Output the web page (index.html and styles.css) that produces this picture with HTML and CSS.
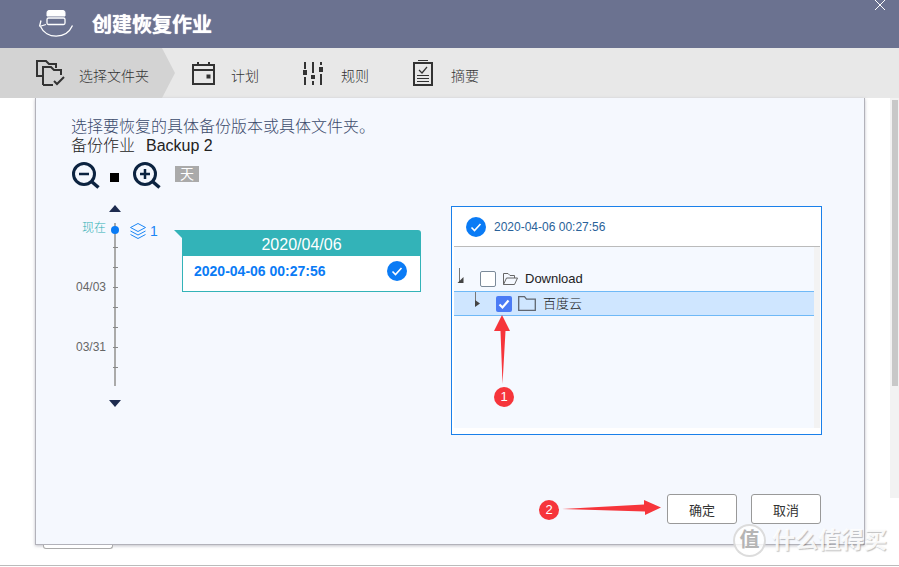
FILE: index.html
```html
<!DOCTYPE html>
<html lang="zh-CN">

	<head>
		<meta charset="UTF-8">
		<title>创建恢复作业</title>
		<link rel="stylesheet" href="styles.css">
	</head>

	<body>
		<div id="page">
			<!-- 标题栏 -->
			<div class="header">
				<svg class="logo" viewBox="0 0 36 28" width="36" height="28" fill="none" stroke="#fff">
					<path d="M9 7V3.500Q9 1.500 11 1.500H25Q27 1.500 27 3.500V7Z" fill="#fff" stroke-width="1" />
					<rect x="9" y="9" width="18" height="6.500" rx="1.500" stroke-width="1.300" />
					<path d="M2.500 17.500C8 30 28 31 34.500 16.500" stroke-width="1.300" />
					<path d="M1.500 17.500L8 15.500M1.500 17.500L3 11.500" stroke-width="1.300" />
				</svg>
				<h1 class="title">创建恢复作业</h1>
				<svg class="close" viewBox="0 0 10 10" width="10" height="10" stroke="#fff" stroke-width="1">
					<path d="M0 0L10 10M10 0L0 10" />
				</svg>
			</div>

			<!-- 步骤 -->
			<div class="tabs">
				<div class="tab active">
					<svg viewBox="0 0 30 26" width="30" height="26" fill="none" stroke="#333" stroke-width="2">
						<path d="M7 16H1V1H10L13 4H20V8" />
						<path d="M7 25V7H15L18 10H25V15M7 25H17" />
						<path d="M18 21L21 24L28 17" />
					</svg>
					<span>选择文件夹</span>
				</div>
				<div class="tab tab-plan">
					<svg viewBox="0 0 23 23" width="23" height="23" fill="none" stroke="#333" stroke-width="2">
						<rect x="1" y="3" width="21" height="19" />
						<path d="M1 8H22M6 0V3M17 0V3" />
						<rect x="14.500" y="12.500" width="4" height="4" fill="#333" stroke="none" />
					</svg>
					<span>计划</span>
				</div>
				<div class="tab">
					<svg viewBox="0 0 20 23" width="20" height="23" fill="#333">
						<rect x="1" y="0" width="2" height="7" />
						<rect x="0" y="8" width="4" height="5" />
						<rect x="1" y="15" width="2" height="8" />
						<rect x="9" y="0" width="2" height="11" />
						<rect x="8" y="13" width="4" height="4" />
						<rect x="9" y="19" width="2" height="4" />
						<rect x="17" y="0" width="2" height="3" />
						<rect x="16" y="5" width="4" height="5" />
						<rect x="17" y="12" width="2" height="11" />
					</svg>
					<span>规则</span>
				</div>
				<div class="tab">
					<svg viewBox="0 0 20 26" width="20" height="26" fill="none" stroke="#333">
						<rect x="1" y="3" width="18" height="22" stroke-width="2" />
						<path d="M5 0.500H15" />
						<path d="M6 10L9 13L14 7" stroke-width="1.200" />
						<path d="M4 15.500H16M4 18.500H16M4 21.500H16" />
					</svg>
					<span>摘要</span>
				</div>
			</div>

			<div class="main">
				<div class="panel-col">
					<div class="panel">
						<p class="desc">选择要恢复的具体备份版本或具体文件夹。</p>
						<p class="job"><span>备份作业</span><span>Backup 2</span></p>

						<!-- 缩放 -->
						<div class="zoom-row">
							<svg viewBox="0 0 28 27" width="28" height="27" fill="none" stroke="#0c2340" stroke-width="3">
								<circle cx="12" cy="12" r="10.500" />
								<path d="M7 12H17" stroke-width="2.500" />
								<path d="M19.500 19.500L26.500 25.500" stroke-width="3.500" />
							</svg>
							<i class="zoom-dot"></i>
							<svg viewBox="0 0 28 27" width="28" height="27" fill="none" stroke="#0c2340" stroke-width="3">
								<circle cx="12" cy="12" r="10.500" />
								<path d="M7 12H17M12 7V17" stroke-width="2.500" />
								<path d="M19.500 19.500L26.500 25.500" stroke-width="3.500" />
							</svg>
							<span class="unit">天</span>
						</div>

						<div class="content">
							<!-- 时间轴 -->
							<div class="timeline">
								<i class="tl-arrow up"></i>
								<div class="tl-rows">
									<i class="tl-spine"></i>
									<div class="tl-row">
										<span class="tl-label now">现在</span>
										<span class="tl-mark"><i class="tl-dot"></i></span>
										<span class="tl-count">
											<svg viewBox="0 0 16 17" width="16" height="17" fill="none" stroke="#1a86f5">
												<path d="M8 0.500L15.500 4.500L8 8.500L0.500 4.500Z" />
												<path d="M0.500 8L8 12L15.500 8" />
												<path d="M0.500 11.500L8 15.500L15.500 11.500" />
											</svg>
											1
										</span>
									</div>
									<div class="tl-row"><span class="tl-label"></span><span class="tl-mark"><i class="tl-tick"></i></span></div>
									<div class="tl-row"><span class="tl-label"></span><span class="tl-mark"><i class="tl-tick"></i></span></div>
									<div class="tl-row"><span class="tl-label">04/03</span><span class="tl-mark"><i class="tl-tick"></i></span></div>
									<div class="tl-row"><span class="tl-label"></span><span class="tl-mark"><i class="tl-tick"></i></span></div>
									<div class="tl-row"><span class="tl-label"></span><span class="tl-mark"><i class="tl-tick"></i></span></div>
									<div class="tl-row"><span class="tl-label">03/31</span><span class="tl-mark"><i class="tl-tick"></i></span></div>
									<div class="tl-row"><span class="tl-label"></span><span class="tl-mark"><i class="tl-tick"></i></span></div>
								</div>
								<i class="tl-arrow down"></i>
							</div>

							<!-- 版本卡片 -->
							<div class="card">
								<div class="card-head">2020/04/06</div>
								<div class="card-body">
									<span>2020-04-06 00:27:56</span>
									<svg class="check-round" viewBox="0 0 20 20" width="20" height="20">
										<circle cx="10" cy="10" r="10" fill="#0a7bf5" />
										<path d="M5.500 10.500L8.500 13.500L14.500 7" fill="none" stroke="#fff" stroke-width="1.600" />
									</svg>
								</div>
							</div>

							<!-- 文件夹树 -->
							<div class="tree">
								<div class="tree-head">
									<svg class="check-round" viewBox="0 0 20 20" width="20" height="20">
										<circle cx="10" cy="10" r="10" fill="#0a7bf5" />
										<path d="M5.500 10.500L8.500 13.500L14.500 7" fill="none" stroke="#fff" stroke-width="1.600" />
									</svg>
									<span>2020-04-06 00:27:56</span>
								</div>
								<div class="tree-body">
									<div class="tree-list">
										<div class="tree-row">
											<svg class="expander" viewBox="0 0 8 17" width="8" height="17">
												<path d="M3.500 1V16" stroke="#777" />
												<path d="M7.500 10V16H1.500Z" fill="#444" />
											</svg>
											<i class="checkbox"></i>
											<svg class="folder" viewBox="0 0 16 14" width="16" height="14" fill="none" stroke="#666">
												<path d="M1.500 12.500V1.500H6L8 3.500H12.500V6" />
												<path d="M1.500 12.500L4.500 6H15.500L12.500 12.500Z" />
											</svg>
											<span>Download</span>
										</div>
										<div class="tree-row selected">
											<svg class="expander" viewBox="0 0 8 17" width="8" height="17">
												<path d="M1.500 0V9" stroke="#777" />
												<path d="M1 8L6 11.500L1 15Z" fill="#444" />
											</svg>
											<i class="checkbox checked">
												<svg viewBox="0 0 16 16" width="16" height="16" fill="none" stroke="#fff" stroke-width="2.200">
													<path d="M3.500 8.500L6.500 11.500L12.500 4.500" />
												</svg>
											</i>
											<svg class="folder" viewBox="0 0 18 15" width="18" height="15" fill="none" stroke="#5f6670" stroke-width="1.300">
												<path d="M0.700 14.300V0.700H6.500L8.500 3.200H17.300V14.300Z" />
											</svg>
											<span class="cn-name">百度云</span>
										</div>
									</div>
									<div class="tree-scroll"></div>
								</div>
							</div>
						</div>

						<div class="footer">
							<button class="btn">确定</button>
							<button class="btn">取消</button>
						</div>
					</div>
					<div class="ghost-btn"></div>
				</div>
				<div class="scrollbar"><div class="thumb"></div></div>
			</div>

			<div class="bottom-line"></div>

			<!-- 标注 -->
			<svg class="arrow-one" viewBox="0 0 24 102" width="24" height="102">
				<path d="M11 0L19 16H14.500L11.500 69L9.500 16H3Z" fill="#f6353b" />
			</svg>
			<span class="mark mark-one">1</span>
			<svg class="arrow-two" viewBox="0 0 100 18" width="100" height="18">
				<path d="M0 10L82 5.500V1L99 8.500L83 16V12.500Z" fill="#f6353b" />
			</svg>
			<span class="mark mark-two">2</span>

			<!-- 水印 -->
			<div class="watermark">
				<span class="wm-badge">值</span>
				<span class="wm-text">什么值得买</span>
			</div>
		</div>
	</body>

</html>
```

FILE: styles.css
```css
* {
	box-sizing: border-box;
}

body {
	margin: 0;
	background: #fff;
	font-family: "Liberation Sans", "Noto Sans CJK SC", sans-serif;
}

p,
h1 {
	margin: 0;
}

#page {
	position: relative;
	display: flex;
	flex-direction: column;
	width: 899px;
	height: 567px;
	overflow: hidden;
}

.header {
	display: flex;
	align-items: center;
	flex: none;
	height: 48px;
	padding-left: 38px;
	background: #6b7290;
}

.logo {
	margin-top: -2px;
}

.title {
	margin: 1px 0 0 18px;
	color: #fff;
	font-size: 20px;
	font-weight: 700;
	line-height: 48px;
	text-shadow: 0 0 1px #fff;
}

.close {
	margin: -38px 14px 0 auto;
}

.tabs {
	display: flex;
	align-items: center;
	flex: none;
	height: 50px;
	background: #e8e8e8;
}

.tab {
	display: flex;
	align-items: center;
	gap: 18px;
	margin-left: 44px;
	color: #333;
	font-size: 14px;
	font-weight: 300;
}

.tab span {
	margin-top: 3px;
}

.tab.active {
	gap: 13px;
	width: 175px;
	height: 50px;
	margin-left: 0;
	padding-left: 36px;
	background: #d3d3d3;
	clip-path: polygon(0 0, 162px 0, 175px 50%, 162px 100%, 0 100%);
}

.tab-plan {
	gap: 16px;
	margin-left: 17px;
}

.main {
	display: flex;
	flex: none;
}

.panel-col {
	margin-left: 35px;
}

.panel {
	display: flex;
	flex-direction: column;
	width: 830px;
	height: 447px;
	padding: 19px 0 20px 35px;
	background: #f5f8fe;
	border: 1px solid #b2b2ba;
	border-top: none;
	box-shadow: 0 1px 3px rgba(80, 80, 100, .35);
}

.desc {
	color: #3b4a6b;
	font-size: 16px;
	font-weight: 300;
	line-height: 19px;
}

.job {
	display: flex;
	gap: 11px;
	color: #222;
	font-size: 16px;
	font-weight: 300;
	line-height: 19px;
}

.zoom-row {
	display: flex;
	align-items: center;
	height: 27px;
	margin-top: 7px;
	margin-bottom: 1px;
	padding-left: 1px;
}

.zoom-dot {
	width: 9px;
	height: 9px;
	margin: 3px 14px 0 10px;
	background: #000;
}

.unit {
	width: 24px;
	height: 16px;
	margin: -3px 0 0 14px;
	background: #aaa;
	color: #fff;
	font-size: 14px;
	line-height: 16px;
	text-align: center;
}

.content {
	display: flex;
	align-items: flex-start;
	margin-top: 16px;
}

.timeline {
	flex: none;
	width: 103px;
	margin-top: -1px;
}

.tl-arrow {
	display: block;
	width: 0;
	margin-left: 38px;
	border-right: 6px solid transparent;
	border-left: 6px solid transparent;
}

.tl-arrow.up {
	margin-bottom: 5px;
	border-bottom: 7px solid #1d2b4f;
}

.tl-arrow.down {
	margin-top: 23px;
	border-top: 7px solid #1d2b4f;
}

.tl-rows {
	position: relative;
}

.tl-spine {
	position: absolute;
	top: 6px;
	bottom: -9px;
	left: 43px;
	width: 2px;
	background: #aaa;
}

.tl-row {
	display: flex;
	align-items: center;
	height: 20px;
}

.tl-label {
	width: 35px;
	color: #666;
	font-size: 12px;
	font-weight: 300;
	text-align: right;
}

.tl-label.now {
	margin-top: -2px;
	color: #2fb0b5;
}

.tl-mark {
	position: relative;
	display: flex;
	align-items: center;
	justify-content: center;
	width: 18px;
}

.tl-dot {
	width: 8px;
	height: 8px;
	margin-top: 5px;
	border-radius: 50%;
	background: #0a7bf5;
}

.tl-tick {
	width: 5px;
	height: 1px;
	background: #888;
}

.tl-count {
	display: flex;
	align-items: center;
	gap: 4px;
	margin: 8px 0 0 6px;
	color: #1a86f5;
	font-size: 14px;
}

.card {
	flex: none;
	width: 247px;
	margin-top: 24px;
}

.card-head {
	height: 26px;
	padding-left: 8px;
	background: #33b3b8;
	border-top-right-radius: 3px;
	color: #fff;
	font-size: 16px;
	line-height: 29px;
	text-align: center;
	clip-path: polygon(0 0, 100% 0, 100% 100%, 8px 100%, 8px 8px);
}

.card-body {
	display: flex;
	align-items: center;
	justify-content: space-between;
	height: 36px;
	margin-left: 8px;
	padding: 0 13px 5px 11px;
	background: #fff;
	border: 1px solid #33b3b8;
	border-top: none;
	color: #0a7bf5;
	font-size: 14px;
	font-weight: 700;
}

.tree {
	flex: none;
	width: 371px;
	height: 229px;
	margin-left: 30px;
	padding: 0 1px 0 2px;
	background: #fff;
	border: 1px solid #1a80ea;
}

.tree-head {
	display: flex;
	align-items: center;
	gap: 8px;
	height: 40px;
	padding-left: 12px;
	border-bottom: 1px solid #bbb;
	color: #2a6299;
	font-size: 12px;
}

.tree-body {
	display: flex;
	height: 181px;
	background: #f5f9ff;
}

.tree-list {
	flex: 1;
	padding-top: 19px;
}

.tree-scroll {
	width: 6px;
	background: #f3f3f3;
}

.tree-row {
	display: flex;
	align-items: center;
	height: 25px;
	padding-left: 2px;
	color: #222;
	font-size: 13px;
}

.tree-row .expander {
	align-self: flex-start;
	margin: 1px 16px 0 0;
}

.tree-row .folder {
	margin: 0 7px 0 6px;
}

.tree-row .cn-name {
	margin-top: -3px;
	font-weight: 300;
}

.tree-row.selected {
	padding-left: 20px;
	background: #cfe6ff;
	border-top: 1px solid #6fb9f7;
	border-bottom: 1px solid #6fb9f7;
}

.tree-row.selected .expander {
	margin: 0 14px 0 0;
}

.checkbox {
	display: block;
	flex: none;
	width: 16px;
	height: 16px;
	background: #fff;
	border: 1px solid #7b8a99;
	border-radius: 2px;
}

.checkbox.checked {
	background: #4b7bf5;
	border: none;
}

.checkbox svg {
	display: block;
}

.footer {
	display: flex;
	justify-content: flex-end;
	gap: 14px;
	margin: auto 43px 0 0;
}

.btn {
	width: 70px;
	height: 30px;
	padding: 0;
	background: #fff;
	border: 1px solid #999;
	border-radius: 3px;
	color: #333;
	font-family: inherit;
	font-size: 13px;
}

.ghost-btn {
	width: 70px;
	height: 4px;
	margin-left: 8px;
	background: #fff;
	border: 1px solid #aaa;
	border-top: none;
	border-radius: 0 0 3px 3px;
}

.scrollbar {
	width: 9px;
	height: 400px;
	margin-left: 25px;
	padding: 2px 1px 0 2px;
	background: #f2f2f2;
}

.thumb {
	height: 286px;
	background: #c8c8c8;
}

.bottom-line {
	height: 1px;
	margin-top: auto;
	margin-bottom: 1px;
	background: #bbb;
}

.arrow-one {
	position: absolute;
	top: 315px;
	left: 491px;
}

.arrow-two {
	position: absolute;
	top: 499px;
	left: 562px;
}

.mark {
	position: absolute;
	width: 20px;
	height: 20px;
	border-radius: 50%;
	background: #f6353b;
	color: #fff;
	font-size: 13px;
	line-height: 20px;
	text-align: center;
}

.mark-one {
	top: 387px;
	left: 494px;
}

.mark-two {
	top: 500px;
	left: 539px;
}

.watermark {
	position: absolute;
	top: 524px;
	left: 733px;
	display: flex;
	align-items: center;
	gap: 6px;
}

.wm-badge {
	width: 33px;
	height: 33px;
	background: rgba(255, 255, 255, .8);
	border: 2px solid rgba(205, 205, 205, .7);
	border-radius: 50%;
	color: #b5b5b5;
	font-size: 20px;
	font-weight: 700;
	line-height: 28px;
	text-align: center;
}

.wm-text {
	color: rgba(255, 255, 255, .9);
	font-size: 23px;
	font-weight: 700;
	line-height: 33px;
	text-shadow: 1px 1px 1px rgba(0, 0, 0, .25);
}
```
